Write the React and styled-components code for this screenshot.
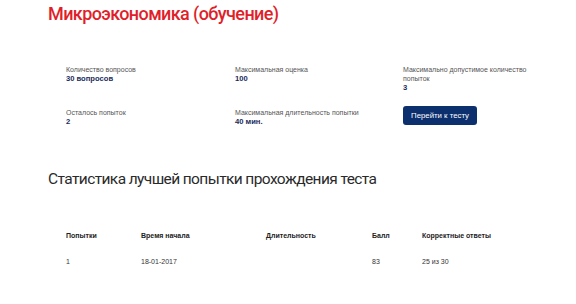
import React from "react";
import styled, { createGlobalStyle } from "styled-components";

const Global = createGlobalStyle`
  html, body {
    margin: 0;
    padding: 0;
    background: #ffffff;
  }
  body {
    font-family: "Liberation Sans", sans-serif;
  }
`;

const Page = styled.div`
  width: 576px;
  height: 304px;
  overflow: hidden;
  padding: 2px 0 0 48px;
  box-sizing: border-box;
`;

const Title = styled.h1`
  margin: 0;
  font-family: Roboto, "Liberation Sans", sans-serif;
  font-size: 18px;
  font-weight: 500;
  line-height: 24px;
  color: #e01f2b;
  letter-spacing: -0.6px;
`;

const InfoGrid = styled.div`
  display: grid;
  grid-template-columns: 169px 168px 130px;
  grid-template-rows: 43px auto;
  margin: 39px 0 0 18px;
`;

const Cell = styled.div`
  display: flex;
  flex-direction: column;
  align-items: flex-start;
`;

const Label = styled.div`
  font-size: 7px;
  line-height: 9px;
  color: #555;
  max-width: ${(p) => p.$wrap || "none"};
`;

const Value = styled.div`
  font-size: 7.6px;
  line-height: 10px;
  font-weight: 700;
  color: #1b2b5c;
`;

const Button = styled.button`
  margin-top: -2px;
  width: 74px;
  height: 19px;
  border: none;
  border-radius: 3px;
  background: #0c2f6e;
  color: #fff;
  font-family: "Liberation Sans", sans-serif;
  font-size: 7.8px;
  padding: 0;
`;

const Heading = styled.h2`
  margin: 41px 0 0 0;
  font-family: Roboto, "Liberation Sans", sans-serif;
  font-size: 15.5px;
  font-weight: 400;
  line-height: 22px;
  letter-spacing: -0.6px;
  color: #2a2a2a;
`;

const Table = styled.div`
  margin: 32px 0 0 18px;
  display: flex;
  flex-direction: column;
`;

const Row = styled.div`
  display: grid;
  grid-template-columns: 75px 125px 106px 50px auto;
  height: 26px;
  align-items: center;
  font-size: 7px;
  color: ${(p) => (p.$head ? "#222" : "#333")};
  font-weight: ${(p) => (p.$head ? 700 : 400)};
`;

const App = () => {
  return (
    <>
      <Global />
      <Page>
        <Title>Микроэкономика (обучение)</Title>
        <InfoGrid>
          <Cell>
            <Label>Количество вопросов</Label>
            <Value>30 вопросов</Value>
          </Cell>
          <Cell>
            <Label>Максимальная оценка</Label>
            <Value>100</Value>
          </Cell>
          <Cell>
            <Label $wrap="125px">Максимально допустимое количество попыток</Label>
            <Value>3</Value>
          </Cell>
          <Cell>
            <Label>Осталось попыток</Label>
            <Value>2</Value>
          </Cell>
          <Cell>
            <Label>Максимальная длительность попытки</Label>
            <Value>40 мин.</Value>
          </Cell>
          <Cell>
            <Button>Перейти к тесту</Button>
          </Cell>
        </InfoGrid>
        <Heading>Статистика лучшей попытки прохождения теста</Heading>
        <Table>
          <Row $head>
            <span>Попытки</span>
            <span>Время начала</span>
            <span>Длительность</span>
            <span>Балл</span>
            <span>Корректные ответы</span>
          </Row>
          <Row>
            <span>1</span>
            <span>18-01-2017</span>
            <span></span>
            <span>83</span>
            <span>25 из 30</span>
          </Row>
        </Table>
      </Page>
    </>
  );
};

export default App;
